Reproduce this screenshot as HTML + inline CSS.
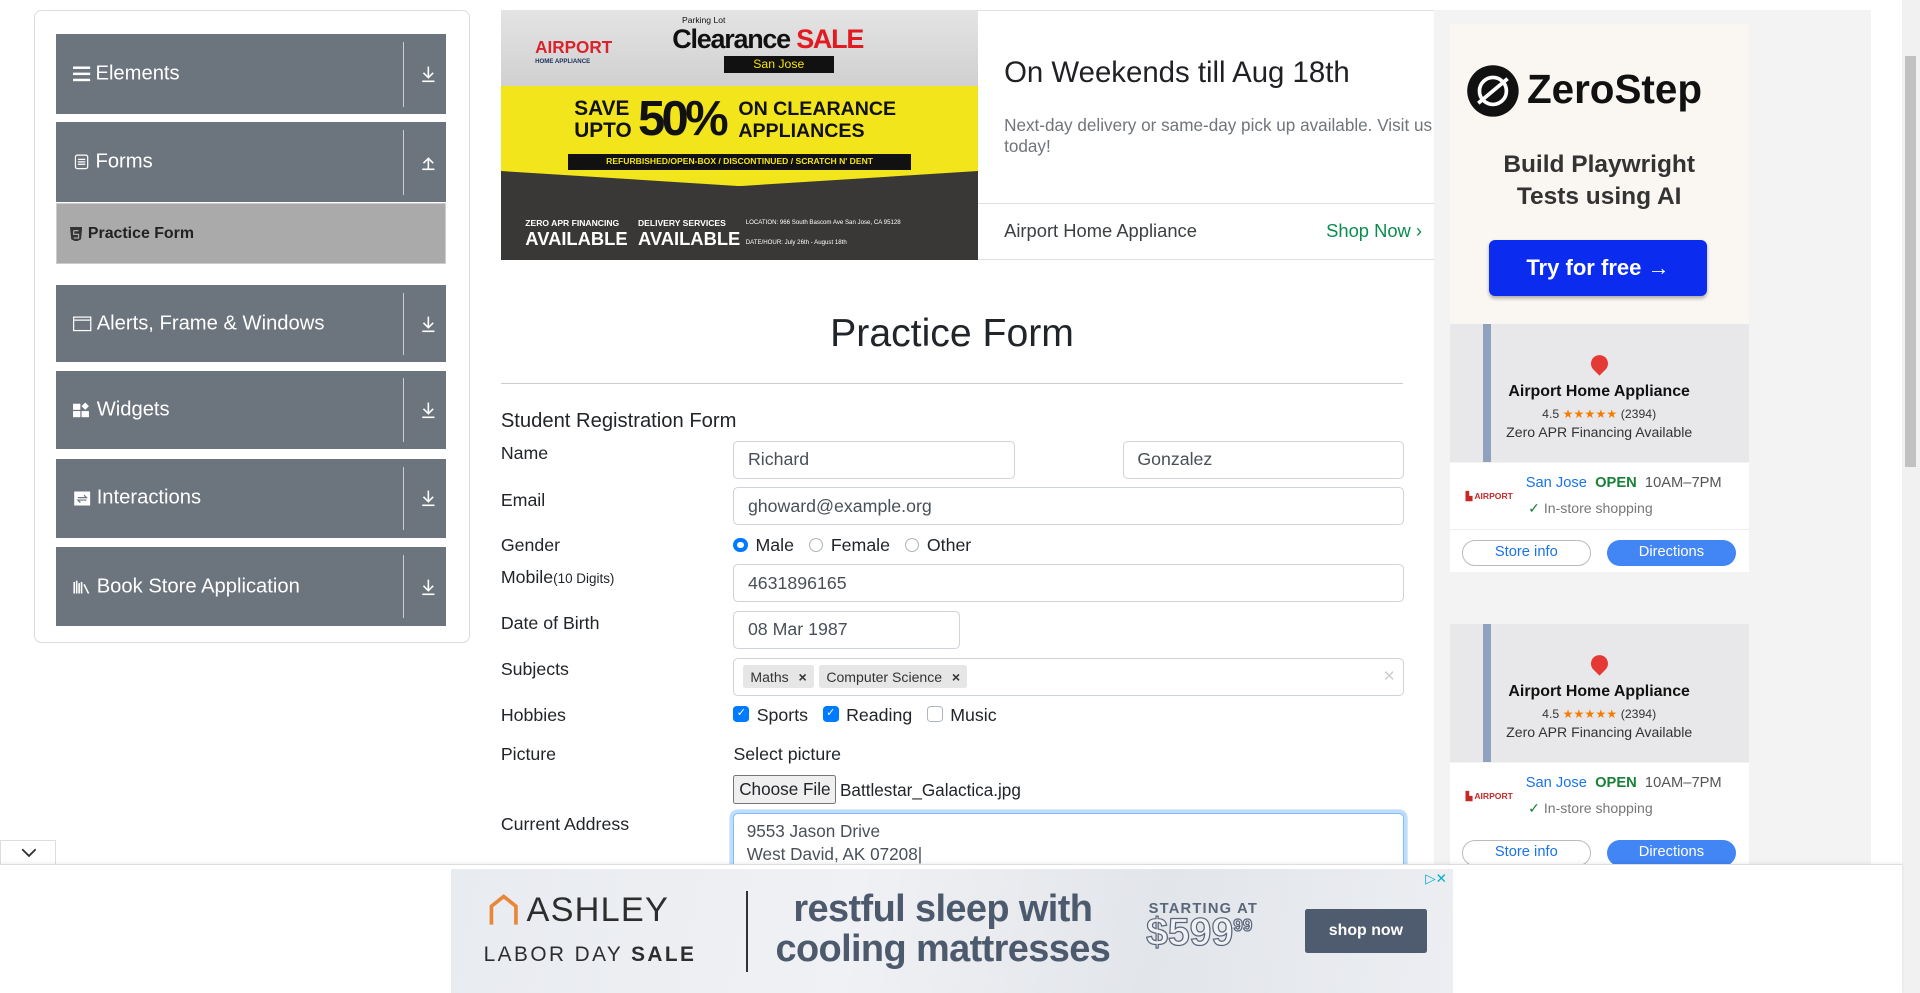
<!DOCTYPE html>
<html><head><meta charset="utf-8">
<style>
html,body{margin:0;padding:0;overflow:hidden;background:#fff;width:1920px;height:993px}
#w{position:relative;width:1568px;height:811px;zoom:1.22449;font-family:"Liberation Sans",Arial,sans-serif;color:#212529;overflow:hidden}
.a{position:absolute}
.card{left:28px;top:8px;width:356px;height:517px;border:1px solid #dcdcdc;border-radius:6px;box-sizing:border-box}
.it{left:46px;width:318px;background:#6c757d;color:#fff;font-size:16.5px}
.it .t{position:absolute;left:14px;top:50%;transform:translateY(-50%);display:flex;align-items:center;gap:4px}
.it .sep{position:absolute;left:283px;top:6px;bottom:6px;width:1px;background:#c9ccd0}
.it .ar{position:absolute;left:298px;top:50%;transform:translateY(-50%);width:12px;height:14px}
.lbl{left:409px;font-size:14.5px}
.in{border:1px solid #ced4da;border-radius:4px;box-sizing:border-box;font-size:14.5px;color:#495057;padding:0 11px;display:flex;align-items:center;background:#fff}
.rb{display:inline-block;width:12px;height:12px;border:1px solid #adb5bd;border-radius:50%;box-sizing:border-box;vertical-align:-1px;margin-right:6px}
.cb{display:inline-block;width:13px;height:13px;border-radius:3px;box-sizing:border-box;vertical-align:middle;position:relative;top:-2px;margin-right:6px;background:#007bff;color:#fff;font-size:9px;text-align:center;line-height:13px;overflow:hidden}
.tag{background:#e6e6e6;border-radius:2px;font-size:11.5px;padding:3px 6px;display:inline-flex;gap:8px;margin-right:4px;color:#333}
</style></head><body><div id="w">

<div class="a card"></div>
<div class="a it" style="top:28px;height:65px"><div class="t"><svg width="14" height="12"><rect y="0" width="14" height="2" fill="#fff"/><rect y="5" width="14" height="2" fill="#fff"/><rect y="10" width="14" height="2" fill="#fff"/></svg>Elements</div><div class="sep"></div><svg class="ar" viewBox="0 0 12 14"><path d="M6 1v9M2 6l4 4 4-4M1 13h10" stroke="#fff" stroke-width="1.3" fill="none"/></svg></div>
<div class="a it" style="top:100px;height:65px"><div class="t"><svg width="14" height="12"><rect x="2" y="0.5" width="10" height="11" rx="1.5" stroke="#fff" fill="none"/><path d="M4 4h6M4 6h6M4 8h6" stroke="#fff"/></svg>Forms</div><div class="sep"></div><svg class="ar" viewBox="0 0 12 14"><path d="M6 13V4M2 8l4-4 4 4M1 13h10" stroke="#fff" stroke-width="1.3" fill="none"/></svg></div>
<div class="a" style="left:46px;top:166px;width:318px;height:50px;background:#aaa;border:1px solid #ccc;box-sizing:border-box"><div class="a" style="left:10px;top:17px;font-size:13px;font-weight:bold;color:#222;display:flex;gap:5px;align-items:center"><svg width="10" height="12"><path d="M0 0h10l-1 10-4 2-4-2z" fill="#333"/><path d="M3 3h4M3 3v3h4v3H3" stroke="#aaa" fill="none"/></svg>Practice Form</div></div>
<div class="a it" style="top:233px;height:63px"><div class="t"><svg width="15" height="12"><rect x="0.5" y="0.5" width="14" height="11" stroke="#fff" fill="none"/><path d="M0 3h15" stroke="#fff"/></svg>Alerts, Frame &amp; Windows</div><div class="sep"></div><svg class="ar" viewBox="0 0 12 14"><path d="M6 1v9M2 6l4 4 4-4M1 13h10" stroke="#fff" stroke-width="1.3" fill="none"/></svg></div>
<div class="a it" style="top:303px;height:64px"><div class="t"><svg width="15" height="12"><rect x="0" y="1" width="6" height="5" fill="#fff"/><rect x="0" y="7" width="6" height="5" fill="#fff"/><rect x="7" y="7" width="6" height="5" fill="#fff"/><path d="M10 0l3 3-3 3-3-3z" fill="#fff"/></svg>Widgets</div><div class="sep"></div><svg class="ar" viewBox="0 0 12 14"><path d="M6 1v9M2 6l4 4 4-4M1 13h10" stroke="#fff" stroke-width="1.3" fill="none"/></svg></div>
<div class="a it" style="top:375px;height:64px"><div class="t"><svg width="15" height="12"><rect x="1" y="0" width="13" height="12" fill="#fff"/><path d="M4 5h7l-2-2M11 7H4l2 2" stroke="#6c757d" fill="none"/></svg>Interactions</div><div class="sep"></div><svg class="ar" viewBox="0 0 12 14"><path d="M6 1v9M2 6l4 4 4-4M1 13h10" stroke="#fff" stroke-width="1.3" fill="none"/></svg></div>
<div class="a it" style="top:447px;height:64px"><div class="t"><svg width="15" height="12"><path d="M1 2v10M3 1v11M5 3v9M7 2v10M9 4l4 8" stroke="#fff" stroke-width="1.3"/></svg>Book Store Application</div><div class="sep"></div><svg class="ar" viewBox="0 0 12 14"><path d="M6 1v9M2 6l4 4 4-4M1 13h10" stroke="#fff" stroke-width="1.3" fill="none"/></svg></div>

<!-- top banner ad -->
<div class="a" style="left:409px;top:8px;width:780px;height:204px;border:1px solid #e0e0e0;box-sizing:border-box;background:#fff"></div>
<div class="a" style="left:409px;top:8px;width:390px;height:204px;overflow:hidden;background:#3a3836">
 <div class="a" style="left:0;top:0;width:390px;height:62px;background:linear-gradient(#e4e4e4,#d0d0d0)"></div>
 <div class="a" style="left:28px;top:22px;font-size:14px;font-weight:bold;color:#d9232d">AIRPORT<div style="font-size:5px;color:#1b2e5a">HOME APPLIANCE</div></div>
 <div class="a" style="left:148px;top:4px;font-size:7px;color:#111">Parking Lot</div>
 <div class="a" style="left:140px;top:12px;font-size:22px;font-weight:bold;color:#111;letter-spacing:-1px">Clearance <span style="color:#e21a22">SALE</span></div>
 <div class="a" style="left:182px;top:38px;width:90px;height:14px;background:#111;color:#f5e200;font-size:10px;text-align:center;line-height:14px">San Jose</div>
 <div class="a" style="left:0;top:62px;width:390px;height:82px;background:#f2e51c;clip-path:polygon(0 0,100% 0,100% 85%,50% 100%,0 85%)"></div>
 <div class="a" style="left:60px;top:72px;font-size:17px;font-weight:bold;color:#111;line-height:18px">SAVE<br>UPTO</div>
 <div class="a" style="left:112px;top:66px;font-size:40px;font-weight:bold;color:#111;letter-spacing:-3px">50%</div>
 <div class="a" style="left:194px;top:72px;font-size:16px;font-weight:bold;color:#111;line-height:18px">ON CLEARANCE<br>APPLIANCES</div>
 <div class="a" style="left:55px;top:118px;width:280px;height:13px;background:#111;color:#f2e51c;font-size:7px;font-weight:bold;text-align:center;line-height:13px;white-space:nowrap">REFURBISHED/OPEN-BOX / DISCONTINUED / SCRATCH N' DENT</div>
 <div class="a" style="left:20px;top:170px;color:#fff;font-size:7px;font-weight:bold">ZERO APR FINANCING<div style="font-size:15px">AVAILABLE</div></div>
 <div class="a" style="left:112px;top:170px;color:#fff;font-size:7px;font-weight:bold">DELIVERY SERVICES<div style="font-size:15px">AVAILABLE</div></div>
 <div class="a" style="left:200px;top:170px;color:#fff;font-size:5px;line-height:8px">LOCATION: 966 South Bascom Ave San Jose, CA 95128<br><br>DATE/HOUR: July 26th - August 18th</div>
</div>
<div class="a" style="left:820px;top:46px;font-size:24px;color:#202124">On Weekends till Aug 18th</div>
<div class="a" style="left:820px;top:94px;width:355px;font-size:14px;color:#70757a;line-height:17px">Next-day delivery or same-day pick up available. Visit us today!</div>
<div class="a" style="left:799px;top:166px;width:380px;height:1px;background:#e0e0e0"></div>
<div class="a" style="left:820px;top:180px;font-size:15px;color:#3c4043">Airport Home Appliance</div>
<div class="a" style="left:1083px;top:180px;font-size:15px;color:#0a8c4e">Shop Now ›</div>

<!-- form -->
<div class="a" style="left:409px;top:255px;width:737px;text-align:center;font-size:32px;color:#212529">Practice Form</div>
<div class="a" style="left:409px;top:313px;width:737px;height:1px;background:#ccc"></div>
<div class="a" style="left:409px;top:335px;font-size:16.5px">Student Registration Form</div>
<div class="a lbl" style="top:362px">Name</div>
<div class="a in" style="left:599px;top:360px;width:230px;height:31px">Richard</div>
<div class="a in" style="left:917px;top:360px;width:230px;height:31px">Gonzalez</div>
<div class="a lbl" style="top:400px">Email</div>
<div class="a in" style="left:599px;top:398px;width:548px;height:31px">ghoward@example.org</div>
<div class="a lbl" style="top:437px">Gender</div>
<div class="a" style="left:599px;top:437px;font-size:14.5px"><span class="rb" style="border:4px solid #007bff"></span>Male &nbsp;&nbsp;<span class="rb"></span>Female &nbsp;&nbsp;<span class="rb"></span>Other</div>
<div class="a lbl" style="top:463px">Mobile<span style="font-size:11px">(10 Digits)</span></div>
<div class="a in" style="left:599px;top:461px;width:548px;height:31px">4631896165</div>
<div class="a lbl" style="top:501px">Date of Birth</div>
<div class="a in" style="left:599px;top:499px;width:185px;height:31px">08 Mar 1987</div>
<div class="a lbl" style="top:538px">Subjects</div>
<div class="a in" style="left:599px;top:537px;width:548px;height:31px;padding:0 7px"><span class="tag">Maths <b>×</b></span><span class="tag">Computer Science <b>×</b></span><span style="margin-left:auto;color:#ccc;font-size:16px">×</span></div>
<div class="a lbl" style="top:576px">Hobbies</div>
<div class="a" style="left:599px;top:576px;font-size:14.5px"><span class="cb">✓</span>Sports &nbsp;&nbsp;<span class="cb">✓</span>Reading &nbsp;&nbsp;<span class="cb" style="background:#fff;border:1px solid #adb5bd"></span>Music</div>
<div class="a lbl" style="top:608px">Picture</div>
<div class="a" style="left:599px;top:608px;font-size:14.5px">Select picture</div>
<div class="a" style="left:599px;top:633px;width:84px;height:24px;background:#efefef;border:1px solid #767676;border-radius:2px;box-sizing:border-box;font-size:14px;text-align:center;line-height:22px">Choose File</div>
<div class="a" style="left:686px;top:637px;font-size:14px">Battlestar_Galactica.jpg</div>
<div class="a lbl" style="top:665px">Current Address</div>
<div class="a" style="left:599px;top:664px;width:548px;height:60px;border:1px solid #80bdff;border-radius:4px;box-shadow:0 0 0 3px rgba(0,123,255,.25);box-sizing:border-box;padding:5px 10px;font-size:14px;color:#495057;line-height:19px;background:#fff">9553 Jason Drive<br>West David, AK 07208|</div>

<!-- right ad column -->
<div class="a" style="left:1171px;top:8px;width:357px;height:710px;background:#f3f3f4"></div>
<div class="a" style="left:1184px;top:20px;width:244px;height:245px;background:#faf6f2"></div>
<svg class="a" style="left:1197px;top:52px" width="44" height="44"><circle cx="22" cy="22" r="21" fill="#111"/><circle cx="22" cy="22" r="11" stroke="#fff" stroke-width="3" fill="none"/><path d="M10 32L34 12" stroke="#fff" stroke-width="3"/></svg>
<div class="a" style="left:1247px;top:54px;font-size:33px;font-weight:bold;color:#111">ZeroStep</div>
<div class="a" style="left:1184px;top:122px;width:244px;text-align:center;font-size:20px;font-weight:bold;color:#333;line-height:26px">Build Playwright<br>Tests using AI</div>
<div class="a" style="left:1216px;top:196px;width:178px;height:46px;background:#0b2cef;border-radius:5px;color:#fff;font-size:18px;font-weight:bold;text-align:center;line-height:46px;box-shadow:0 2px 3px rgba(0,0,0,.3)">Try for free →</div>

<div class="a" style="left:1184px;top:265px;width:244px;height:112px;background:#e8e8ea"></div>
<div class="a" style="left:1211px;top:265px;width:7px;height:112px;background:#8ea2bd"></div>
<div class="a" style="left:1299px;top:290px;width:14px;height:14px;border-radius:50% 50% 50% 0;transform:rotate(-45deg);background:#e53935"></div>
<div class="a" style="left:1184px;top:313px;width:244px;text-align:center;font-size:13px;font-weight:bold;color:#111">Airport Home Appliance</div>
<div class="a" style="left:1184px;top:332px;width:244px;text-align:center;font-size:10px;color:#333">4.5 <span style="color:#f57c00">★★★★★</span> (2394)</div>
<div class="a" style="left:1184px;top:346px;width:244px;text-align:center;font-size:11.5px;color:#333">Zero APR Financing Available</div>
<div class="a" style="left:1184px;top:378px;width:244px;height:89px;background:#fff"></div>
<div class="a" style="left:1197px;top:401px;font-size:7px;color:#c62828;font-weight:bold">▙ AIRPORT</div>
<div class="a" style="left:1246px;top:388px;font-size:12px;color:#1a73e8">San Jose <span style="color:#188038;font-weight:bold">&nbsp;OPEN</span> <span style="color:#555">&nbsp;10AM–7PM</span></div>
<div class="a" style="left:1248px;top:408px;font-size:11.5px;color:#777"><span style="color:#188038">✓</span> In-store shopping</div>
<div class="a" style="left:1184px;top:432px;width:244px;height:1px;background:#eee"></div>
<div class="a" style="left:1194px;top:441px;width:105px;height:21px;border:1px solid #bbb;border-radius:11px;box-sizing:border-box;text-align:center;font-size:12px;color:#1a73e8;line-height:19px">Store info</div>
<div class="a" style="left:1312px;top:441px;width:106px;height:21px;background:#4285f4;border-radius:11px;text-align:center;font-size:12px;color:#fff;line-height:21px">Directions</div>

<div class="a" style="left:1184px;top:510px;width:244px;height:112px;background:#e8e8ea"></div>
<div class="a" style="left:1211px;top:510px;width:7px;height:112px;background:#8ea2bd"></div>
<div class="a" style="left:1299px;top:535px;width:14px;height:14px;border-radius:50% 50% 50% 0;transform:rotate(-45deg);background:#e53935"></div>
<div class="a" style="left:1184px;top:558px;width:244px;text-align:center;font-size:13px;font-weight:bold;color:#111">Airport Home Appliance</div>
<div class="a" style="left:1184px;top:577px;width:244px;text-align:center;font-size:10px;color:#333">4.5 <span style="color:#f57c00">★★★★★</span> (2394)</div>
<div class="a" style="left:1184px;top:591px;width:244px;text-align:center;font-size:11.5px;color:#333">Zero APR Financing Available</div>
<div class="a" style="left:1184px;top:623px;width:244px;height:89px;background:#fff"></div>
<div class="a" style="left:1197px;top:646px;font-size:7px;color:#c62828;font-weight:bold">▙ AIRPORT</div>
<div class="a" style="left:1246px;top:633px;font-size:12px;color:#1a73e8">San Jose <span style="color:#188038;font-weight:bold">&nbsp;OPEN</span> <span style="color:#555">&nbsp;10AM–7PM</span></div>
<div class="a" style="left:1248px;top:653px;font-size:11.5px;color:#777"><span style="color:#188038">✓</span> In-store shopping</div>
<div class="a" style="left:1194px;top:686px;width:105px;height:21px;border:1px solid #bbb;border-radius:11px;box-sizing:border-box;text-align:center;font-size:12px;color:#1a73e8;line-height:19px">Store info</div>
<div class="a" style="left:1312px;top:686px;width:106px;height:21px;background:#4285f4;border-radius:11px;text-align:center;font-size:12px;color:#fff;line-height:21px">Directions</div>

<!-- scrollbar -->
<div class="a" style="left:1553px;top:0;width:15px;height:811px;background:#f1f1f1"></div>
<div class="a" style="left:1556px;top:46px;width:9px;height:335px;background:#c1c1c1"></div>

<!-- bottom ad -->
<div class="a" style="left:0;top:686px;width:46px;height:21px;background:#fff;border:1px solid #ddd;border-bottom:none;box-sizing:border-box"><svg class="a" style="left:16px;top:6px" width="13" height="8"><path d="M1 1l5.5 5.5L12 1" stroke="#333" stroke-width="1.5" fill="none"/></svg></div>
<div class="a" style="left:0;top:706px;width:1553px;height:105px;background:#fff;border-top:1px solid #ddd;box-shadow:0 -1px 3px rgba(0,0,0,.08)"></div>
<div class="a" style="left:368px;top:710px;width:819px;height:101px;background:linear-gradient(100deg,#e8ebf0,#f0f1f4 40%,#e2e5ea 70%,#eceef2)"></div>
<svg class="a" style="left:399px;top:730px" width="24" height="26"><path d="M2 25V10L12 2l10 8v15" stroke="#e8863a" stroke-width="3" fill="none"/></svg>
<div class="a" style="left:430px;top:728px;font-size:28px;color:#2d2d2d;letter-spacing:1px">ASHLEY</div>
<div class="a" style="left:395px;top:770px;font-size:17px;color:#2d2d2d;letter-spacing:2px">LABOR DAY <b>SALE</b></div>
<div class="a" style="left:609px;top:728px;width:2px;height:66px;background:#333"></div>
<div class="a" style="left:620px;top:726px;width:300px;text-align:center;font-size:31px;font-weight:bold;color:#4d5a6e;line-height:33px;letter-spacing:-.5px">restful sleep with<br>cooling mattresses</div>
<div class="a" style="left:938px;top:736px;font-size:12px;font-weight:bold;color:#5a667a;letter-spacing:1px">STARTING AT</div>
<div class="a" style="left:936px;top:744px;font-size:32px;font-weight:bold;color:#f0f1f4;-webkit-text-stroke:1px #5a667a">$599<sup style="font-size:14px">99</sup></div>
<div class="a" style="left:1066px;top:742px;width:99px;height:36px;background:#4f5b6e;border-radius:2px;color:#fff;font-size:13px;font-weight:bold;text-align:center;line-height:36px">shop now</div>
<div class="a" style="left:1164px;top:711px;font-size:11px;color:#00aecd">▷✕</div>
</div></body></html>
